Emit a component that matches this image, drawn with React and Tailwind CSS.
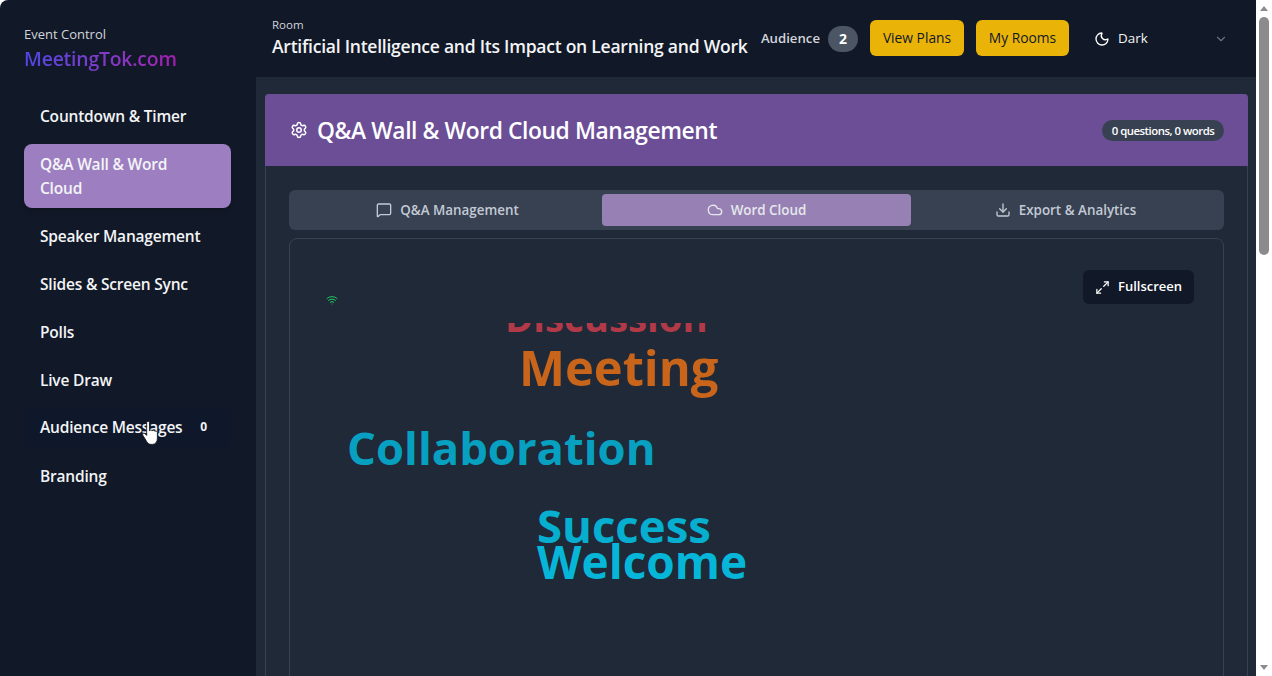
import React from 'react';
import { Settings, MessageSquare, Cloud, Download, Maximize2, Moon, ChevronDown, Wifi } from 'lucide-react';

const font = { fontFamily: '"Open Sans", "Noto Sans", sans-serif' };

const navItems = [
  'Countdown & Timer',
  'Q&A Wall & Word Cloud',
  'Speaker Management',
  'Slides & Screen Sync',
  'Polls',
  'Live Draw',
  'Audience Messages',
  'Branding',
];

function Sidebar() {
  return (
    <aside className="w-[256px] shrink-0 bg-[#111827] rounded-tl-lg px-6 pt-6">
      <div className="text-[13px] leading-5 text-[#d1d5db]">Event Control</div>
      <div className="mt-[1px] text-[19.4px] leading-7 font-semibold tracking-[-0.2px] bg-gradient-to-r from-[#4f46e5] to-[#a21caf] bg-clip-text text-transparent w-max">
        MeetingTok.com
      </div>
      <nav className="mt-[23px] w-[207px] flex flex-col gap-2">
        {navItems.map((item) => {
          const active = item.startsWith('Q&A');
          const hover = item === 'Audience Messages';
          return (
            <div
              key={item}
              className={`px-4 py-2 rounded-lg text-[15.5px] leading-6 font-semibold tracking-[-0.2px] text-[#f3f4f6] flex items-center justify-between ${active ? 'bg-[#9d7fc1] shadow-md' : ''} ${hover ? 'bg-[#0f172a] -translate-y-px' : ''}`}
            >
              <span className={active ? 'w-[150px]' : ''}>{item}</span>
              {hover && <span className="text-xs font-bold pr-2">0</span>}
            </div>
          );
        })}
      </nav>
    </aside>
  );
}

function Header() {
  return (
    <header className="h-[77px] shrink-0 bg-[#111827] flex items-center pl-4 pr-[28px]">
      <div className="flex-1 min-w-0 -mt-[1px]">
        <div className="text-[11.5px] leading-4 text-[#d1d5db]">Room</div>
        <div className="-mt-px text-[17.55px] leading-7 font-semibold tracking-[-0.25px] text-[#f3f4f6] whitespace-nowrap">
          Artificial Intelligence and Its Impact on Learning and Work
        </div>
      </div>
      <span className="text-[13.2px] font-semibold text-[#d1d5db] mr-2">Audience</span>
      <span className="w-[30px] h-[26px] rounded-full bg-[#4b5563] text-white text-sm font-bold flex items-center justify-center mr-3">2</span>
      <button className="h-9 w-[94px] rounded-md bg-[#eab308] text-[#111827] text-[13.8px] font-medium mr-3 -mt-[1px]">View Plans</button>
      <button className="h-9 w-[93px] rounded-md bg-[#eab308] text-[#111827] text-[13.8px] font-medium mr-[25px] -mt-[1px]">My Rooms</button>
      <Moon size={16} className="text-white mr-2" />
      <span className="text-[13.4px] text-[#f3f4f6] w-[96px]">Dark</span>
      <ChevronDown size={14} className="text-[#6b7280]" />
    </header>
  );
}

function Tab({ icon: Icon, label, active }) {
  return (
    <div className={`flex-1 h-8 rounded flex items-center justify-center gap-2 text-[13.4px] font-semibold ${active ? 'bg-[#9780b4] text-[#e5e7eb]' : 'text-[#c3cad5]'}`}>
      <Icon size={16} />
      {label}
    </div>
  );
}

// word cloud sits on a free canvas, so the words keep their own places
const words = [
  { text: 'Discussion', left: 215, top: -25, size: 38.3, color: '#b23a48' },
  { text: 'Meeting', left: 229, top: 20, size: 48.8, color: '#c8651b' },
  { text: 'Collaboration', left: 57, top: 102, size: 45.4, color: '#07a0c0' },
  { text: 'Success', left: 247, top: 180, size: 45.5, color: '#06aed0' },
  { text: 'Welcome', left: 247, top: 215, size: 46, color: '#06b6d8' },
];

function WordCloud() {
  return (
    <div className="relative mt-2 h-[500px] rounded-lg border border-[#374151]">
      <Wifi size={12} className="absolute left-[36px] top-[55px] text-[#22c55e]" />
      <button className="absolute right-[29px] top-[31px] h-[34px] w-[111px] rounded-md bg-[#111827] text-white text-[13px] font-semibold flex items-center justify-center gap-2">
        <Maximize2 size={15} />
        Fullscreen
      </button>
      <div className="absolute left-0 right-0 top-[84px] h-[400px] overflow-hidden">
        {words.map((w) => (
          <span
            key={w.text}
            className="absolute font-bold leading-none whitespace-nowrap"
            style={{ left: w.left, top: w.top, fontSize: w.size, color: w.color }}
          >
            {w.text}
          </span>
        ))}
      </div>
    </div>
  );
}

function Scrollbar() {
  return (
    <div className="w-4 shrink-0 bg-white flex flex-col items-center">
      <div className="h-[17px] flex items-center justify-center">
        <div className="w-0 h-0 border-x-[4px] border-x-transparent border-b-[5px] border-b-[#8b8b8b]" />
      </div>
      <div className="w-[10px] h-[238px] rounded-full bg-[#8b8b8b]" />
      <div className="flex-1" />
      <div className="h-[17px] flex items-center justify-center">
        <div className="w-0 h-0 border-x-[4px] border-x-transparent border-t-[5px] border-t-[#8b8b8b]" />
      </div>
    </div>
  );
}

export default function App() {
  return (
    <div className="relative h-[676px] w-[1272px] overflow-hidden bg-white flex" style={font}>
      <Sidebar />
      <div className="flex-1 min-w-0 flex flex-col bg-[#1f2937]">
        <Header />
        <main className="flex-1 overflow-hidden pt-[17px] pl-[9px] pr-2">
          <div className="rounded-t-sm border-x border-[#374151] h-[700px] bg-[#1f2937]">
            <div className="-mx-px h-[72px] bg-[#6b4e96] flex items-center justify-between pl-6 pr-6 rounded-t-sm">
              <div className="flex items-center gap-[9px]">
                <Settings size={18} className="text-white ml-px" />
                <h1 className="pt-[3px] text-[22.8px] font-semibold tracking-[-0.4px] text-white">Q&amp;A Wall &amp; Word Cloud Management</h1>
              </div>
              <span className="h-[21px] w-[122px] pt-px rounded-full bg-[#374151] text-white text-[11.4px] font-semibold tracking-[-0.5px] flex items-center justify-center">0 questions, 0 words</span>
            </div>
            <div className="px-[23px] pt-6">
              <div className="h-10 rounded-md bg-[#374151] flex items-center px-1">
                <Tab icon={MessageSquare} label="Q&A Management" />
                <Tab icon={Cloud} label="Word Cloud" active />
                <Tab icon={Download} label="Export & Analytics" />
              </div>
              <WordCloud />
            </div>
          </div>
        </main>
      </div>
      <Scrollbar />
      {/* mouse pointer caught in the shot */}
      <svg className="absolute left-[141px] top-[420px]" width="20" height="26" viewBox="0 0 18 24">
        <path
          d="M5 2.5c0-1.8 2.6-1.8 2.6 0V10c0-.9 2.2-1.2 2.5.2.3-1 2.3-1 2.5.4.5-.8 2.2-.5 2.3 1V17c0 3-1.8 5.5-4.5 5.5H9c-2 0-3-1-4-2.6L1.4 14c-.8-1.4 1-2.6 2.1-1.4L5 14.2z"
          fill="#fff"
          stroke="#111"
          strokeWidth="0.8"
        />
      </svg>
    </div>
  );
}
